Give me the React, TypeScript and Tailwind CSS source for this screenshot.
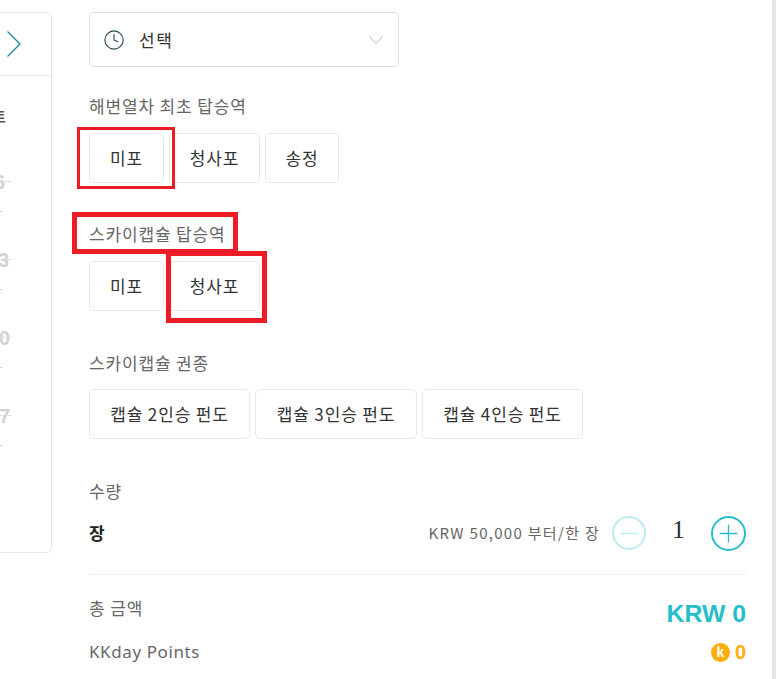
import { ChevronDown, Clock, Minus, Plus } from "lucide-react";

const font = "font-['Noto_Sans_CJK_KR','Noto_Sans',sans-serif]";

function Option({ label, w, marked }: { label: string; w: string; marked?: string }) {
  return (
    <div className={`relative h-[50px] ${w} flex items-center justify-center rounded-[5px] border border-[#e8e8e8] bg-white text-[17px] tracking-[0.85px] text-[#333]`}>
      {label}
      {marked && <span className={`absolute z-10 border-[#ed1c24] ${marked}`} />}
    </div>
  );
}

function Label({ children }: { children: React.ReactNode }) {
  return <div className="text-[17px] leading-[22px] tracking-[0.85px] text-[#666]">{children}</div>;
}

function DayRow({ n, pr }: { n: string; pr: string }) {
  return (
    <div className={`h-[78px] relative flex justify-end ${pr}`}>
      <span className="text-[20px] font-bold leading-[24px] text-[#d2d2d2] font-['Liberation_Sans',sans-serif]">{n}</span>
      <span className="absolute left-0 top-[11px] h-px w-[11px] bg-[#ddd]" />
      <span className="absolute left-0 top-[41px] h-px w-[2px] bg-[#ccc]" />
    </div>
  );
}

export default function App() {
  return (
    <div className={`relative w-[776px] h-[679px] overflow-hidden bg-white flex ${font}`}>
      {/* calendar, cut off on the left */}
      <div className="w-[52px] shrink-0 pt-3">
        <div className="h-[541px] rounded-r-[5px] border border-l-0 border-[#e8e8e8] overflow-hidden">
          <div className="h-[63px] border-b border-[#e8e8e8] flex items-center pl-[6px]">
            <svg width="16" height="28" viewBox="0 0 16 28" fill="none" className="text-[#1a8a96]">
              <path d="M1.5 1.5 L14 14 L1.5 26.5" stroke="currentColor" strokeWidth="1.3" />
            </svg>
          </div>
          <div className="h-[78px] pt-[30px] flex justify-end pr-[45px] text-[14px] font-bold text-[#555] leading-[20px]">트</div>
          <div className="pt-[16px]">
            <DayRow n="6" pr="pr-[46px]" />
            <DayRow n="3" pr="pr-[42px]" />
            <DayRow n="0" pr="pr-[41px]" />
            <DayRow n="7" pr="pr-[41px]" />
          </div>
        </div>
      </div>

      {/* booking form */}
      <div className="w-[657px] ml-[37px] pt-3 shrink-0">
        <div className="w-[310px] h-[55px] rounded-[5px] border border-[#dedede] flex items-center pl-[13px] pr-[9px]">
          <Clock className="w-[22px] h-[22px] text-[#26465a]" strokeWidth={1.2} />
          <span className="ml-[14px] text-[17px] tracking-[1.5px] text-[#333]">선택</span>
          <ChevronDown className="ml-auto w-[26px] h-[26px] text-[#d4d4d4]" strokeWidth={1} />
        </div>

        <div className="mt-[28px]"><Label>해변열차 최초 탑승역</Label></div>
        <div className="mt-[16px] flex gap-[5px]">
          <Option label="미포" w="w-[75px]" marked="border-[3px] -left-[13px] -top-[7px] w-[98px] h-[62px]" />
          <Option label="청사포" w="w-[91px]" />
          <Option label="송정" w="w-[74px]" />
        </div>

        <div className="mt-[40px] relative w-fit">
          <Label>스카이캡슐 탑승역</Label>
          <span className="absolute -left-[17px] -top-[11px] w-[166px] h-[42px] border-[5px] border-[#ed1c24]" />
        </div>
        <div className="mt-[16px] flex gap-[5px]">
          <Option label="미포" w="w-[75px]" />
          <Option label="청사포" w="w-[91px]" marked="border-[5px] -left-[4px] -top-[11px] w-[101px] h-[72px]" />
        </div>

        <div className="mt-[41px]"><Label>스카이캡슐 권종</Label></div>
        <div className="mt-[15px] flex gap-[5px]">
          <Option label="캡슐 2인승 펀도" w="w-[161px]" />
          <Option label="캡슐 3인승 펀도" w="w-[162px]" />
          <Option label="캡슐 4인승 펀도" w="w-[161px]" />
        </div>

        <div className="mt-[41px]"><Label>수량</Label></div>
        <div className="mt-[13px] flex items-center h-[36px]">
          <span className="text-[17px] font-bold text-[#222]">장</span>
          <span className="ml-auto text-[15px] tracking-[1.3px] text-[#666]">KRW 50,000 부터/한 장</span>
          <span className="ml-[12px] w-[34px] h-[34px] rounded-full border-2 border-[#bfecf0] flex items-center justify-center text-[#bfecf0]">
            <Minus className="w-[29px] h-[29px] shrink-0" strokeWidth={1.1} />
          </span>
          <span className="w-[65px] text-center text-[25px] text-[#26303a] font-['Liberation_Serif',serif] -translate-y-[3px]">1</span>
          <span className="w-[35px] h-[35px] rounded-full border-2 border-[#26bec9] flex items-center justify-center text-[#26bec9]">
            <Plus className="w-[29px] h-[29px] shrink-0" strokeWidth={1.1} />
          </span>
        </div>

        <div className="mt-[23px] border-t border-[#eee]" />

        <div className="mt-[22px] flex items-start justify-between">
          <Label>총 금액</Label>
          <span className="mt-[3px] text-[24.8px] leading-[28px] font-bold text-[#26bec9] font-['Liberation_Sans',sans-serif]">KRW 0</span>
        </div>
        <div className="mt-[9px] flex items-center justify-between">
          <span className="text-[17px] tracking-[0.6px] text-[#666] font-['Noto_Sans',sans-serif]">KKday Points</span>
          <span className="flex items-center gap-[5px] text-[20px] font-bold text-[#ffad0d] font-['Liberation_Sans',sans-serif]">
            <span className="w-[19px] h-[19px] rounded-full bg-[#ffad0d] text-white text-[14px] font-bold flex items-center justify-center">k</span>
            0
          </span>
        </div>
      </div>

      {/* page scrollbar edge */}
      <div className="ml-auto w-[4px] shrink-0 bg-[#e6e6e6]" />
    </div>
  );
}
